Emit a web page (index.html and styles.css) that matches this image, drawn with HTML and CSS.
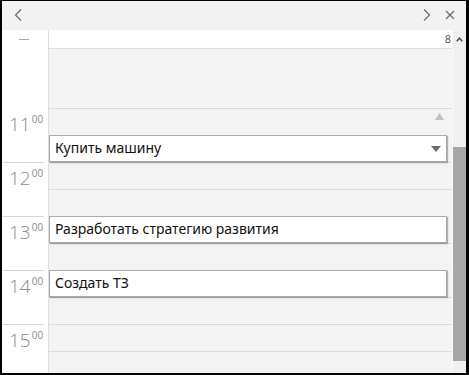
FILE: index.html
```html
<!DOCTYPE html>
<html lang="ru">
<head>
<meta charset="utf-8">
<title>Календарь</title>
<link rel="stylesheet" href="styles.css">
</head>
<body>
<div class="frame">
  <div class="titlebar">
    <span class="tb-btn tb-prev"><svg width="10" height="12" viewBox="0 0 10 12"><polyline points="8,0.5 2.5,6 8,11.5" fill="none" stroke="#6d6d6d" stroke-width="1.2"/></svg></span>
    <span class="tb-fill"></span>
    <span class="tb-btn tb-next"><svg width="10" height="12" viewBox="0 0 10 12"><polyline points="2,0.5 7.5,6 2,11.5" fill="none" stroke="#6d6d6d" stroke-width="1.2"/></svg></span>
    <span class="tb-btn tb-close"><svg width="10" height="10" viewBox="0 0 10 10"><path d="M1 1 L9 9 M9 1 L1 9" fill="none" stroke="#6d6d6d" stroke-width="1.2"/></svg></span>
  </div>
  <div class="body">
    <div class="gutter">
      <div class="gutter-head"><span class="dash"></span></div>
      <div class="gutter-spacer"></div>
      <div class="hour first"><span class="h">11</span><span class="m">00</span></div>
      <div class="hour"><span class="h">12</span><span class="m">00</span></div>
      <div class="hour"><span class="h">13</span><span class="m">00</span></div>
      <div class="hour"><span class="h">14</span><span class="m">00</span></div>
      <div class="hour"><span class="h">15</span><span class="m">00</span></div>
    </div>
    <div class="main">
      <div class="allday"><span class="allday-num">8</span></div>
      <div class="main-spacer"></div>
      <div class="slot slot-more"><svg class="more-up" width="9" height="7" viewBox="0 0 9 7"><polygon points="4.5,0 9,7 0,7" fill="#c2c2c2"/></svg></div>
      <div class="slot busy">
        <div class="event"><span class="ev-text">Купить машину</span><svg class="ev-drop" width="10" height="6" viewBox="0 0 10 6"><polygon points="0,0 10,0 5,6" fill="#6b6b6b"/></svg></div>
      </div>
      <div class="slot"></div>
      <div class="slot"></div>
      <div class="slot busy">
        <div class="event"><span class="ev-text">Разработать стратегию развития</span></div>
      </div>
      <div class="slot"></div>
      <div class="slot busy">
        <div class="event"><span class="ev-text">Создать ТЗ</span></div>
      </div>
      <div class="slot"></div>
      <div class="slot"></div>
      <div class="slot"></div>
    </div>
    <div class="scrollbar">
      <div class="sb-up"><svg width="7" height="5" viewBox="0 0 7 5"><polyline points="0.7,4.3 3.5,1.2 6.3,4.3" fill="none" stroke="#505050" stroke-width="1.5"/></svg></div>
      <div class="sb-track"><div class="sb-thumb"></div></div>
    </div>
  </div>
</div>
</body>
</html>
```

FILE: styles.css
```css
* { box-sizing: border-box; }
html, body { margin: 0; padding: 0; background: #000; }
body { width: 469px; height: 375px; overflow: hidden; font-family: "Noto Sans", "Open Sans", sans-serif; }

.frame {
  width: 469px;
  height: 375px;
  border-style: solid;
  border-color: #000;
  border-width: 1px 3px 2px 2px;
  background: #f2f2f2;
  display: flex;
  flex-direction: column;
  overflow: hidden;
}

.titlebar {
  height: 29px;
  flex: none;
  display: flex;
  align-items: flex-start;
  background: #f2f2f2;
}
.tb-btn { display: block; height: 12px; }
.tb-btn svg { display: block; }
.tb-prev { margin: 8px 0 0 11px; }
.tb-fill { flex: 1; }
.tb-next { margin: 8px 0 0 0; }
.tb-close { margin: 9px 11px 0 13px; }

.body {
  flex: 1;
  display: flex;
  min-height: 0;
}

.gutter {
  width: 47px;
  flex: none;
  background: #fff;
  border-right: 1px solid #dedede;
}
.gutter-head {
  height: 19px;
  padding: 9px 0 0 17px;
}
.dash { display: block; width: 10px; height: 1px; background: #a8a8a8; }
.gutter-spacer { height: 59px; }
.hour {
  height: 54px;
  margin: 0 4px 0 1px;
  border-top: 1px solid #d6d6d6;
  padding: 4px 0 0 6px;
  color: #8a8a8a;
  display: flex;
  align-items: flex-start;
  white-space: nowrap;
}
.hour.first { border-top-color: transparent; }
.h { font-family: "Open Sans", sans-serif; font-weight: 300; font-size: 19px; line-height: 22px; }
.m { font-family: "Open Sans", sans-serif; font-size: 10px; line-height: 10px; margin-left: 1px; margin-top: 1px; }

.main {
  flex: 1;
  background: #f3f3f3;
  border-right: 1px solid #fafafa;
  overflow: hidden;
}
.allday {
  height: 19px;
  background: #fff;
  border-bottom: 1px solid #dedede;
  display: flex;
  justify-content: flex-end;
  padding: 2px 1px 0 0;
  font-size: 11px;
  line-height: 14px;
  color: #555;
}
.main-spacer { height: 59px; }
.slot {
  height: 27px;
  border-top: 1px solid #dcdcdc;
}
.slot.busy { border-top: 0; }
.slot-more {
  display: flex;
  justify-content: flex-end;
  padding: 4px 8px 0 0;
}
.slot-more svg { display: block; }

.event {
  width: 398px;
  height: 27px;
  background: #fff;
  border: 1px solid #a9a9a9;
  box-shadow: 1px 1px 1px rgba(0, 0, 0, 0.28);
  display: flex;
  align-items: center;
  padding: 0 0 2px 5px;
  position: relative;
  z-index: 1;
}
.ev-text {
  flex: 1;
  font-size: 14px;
  line-height: 18px;
  color: #111;
  white-space: nowrap;
}
.ev-drop { display: block; margin: 2px 5px 0 0; }

.scrollbar {
  width: 13px;
  flex: none;
  display: flex;
  flex-direction: column;
  background: #f0f0f0;
}
.sb-up {
  height: 19px;
  display: flex;
  justify-content: center;
  padding-top: 7px;
}
.sb-up svg { display: block; }
.sb-track { flex: 1; padding-top: 98px; }
.sb-thumb { height: 214px; background: #a6a6a6; }
```
